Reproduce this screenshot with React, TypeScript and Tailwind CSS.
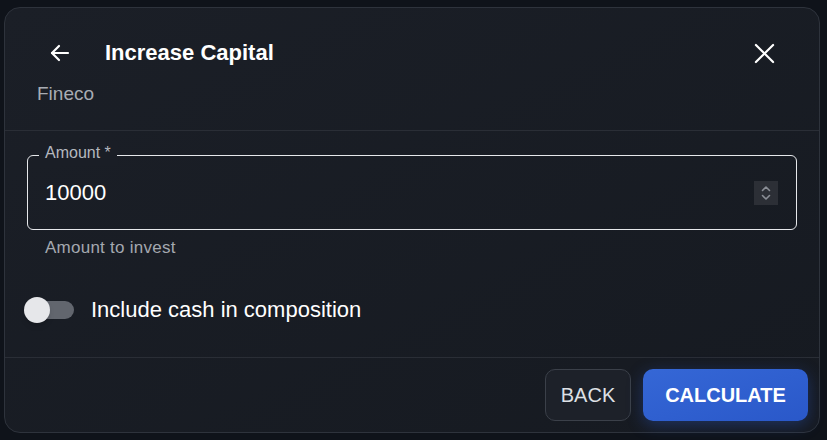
import React from 'react';

const ArrowLeft = () => (
  <svg width="24" height="24" viewBox="0 0 24 24" fill="none" stroke="currentColor" strokeWidth="2.2" strokeLinecap="round" strokeLinejoin="round">
    <path d="M20 12H4" />
    <path d="M11 5l-7 7 7 7" />
  </svg>
);

const CloseIcon = () => (
  <svg width="21" height="21" viewBox="0 0 22 22" fill="none" stroke="currentColor" strokeWidth="2.3" strokeLinecap="round">
    <path d="M2 2l18 18" />
    <path d="M20 2L2 20" />
  </svg>
);

const Spinner = () => (
  <div className="flex h-[24px] w-[24px] items-center justify-center bg-[#2c2f36]">
    <svg width="12" height="18" viewBox="0 0 12 18" fill="none" stroke="#8a8e96" strokeWidth="1.6" strokeLinecap="round" strokeLinejoin="round">
      <path d="M2.5 6.5L6 3l3.5 3.5" />
      <path d="M2.5 11.5L6 15l3.5-3.5" />
    </svg>
  </div>
);

export default function App() {
  return (
    <div
      className="h-[440px] w-[827px] bg-[#0f131a] pl-[4px] pt-[7px]"
      style={{ fontFamily: '"Liberation Sans", Arial, sans-serif' }}
    >
      <div className="flex h-[426px] w-[816px] flex-col rounded-[16px] border border-[#2e333c] bg-gradient-to-br from-[#1b1f27] to-[#161a21]">
        {/* Header */}
        <div className="flex h-[123px] flex-col border-b border-[#2a2e36] px-[32px]">
          <div className="mt-[27px] flex h-[36px] items-center">
            <div className="flex w-[48px] items-center pl-[11px] text-white">
              <ArrowLeft />
            </div>
            <h1 className="ml-[20px] text-[22px] leading-[28px] font-bold text-white">Increase Capital</h1>
            <div className="ml-auto mr-[12px] text-white">
              <CloseIcon />
            </div>
          </div>
          <p className="mt-[11px] text-[19px] leading-[24px] text-[#a8acb3]">Fineco</p>
        </div>

        {/* Body */}
        <div className="flex flex-1 flex-col border-b border-[#2a2e36] px-[22px]">
          <div className="relative mt-[24px] flex h-[75px] items-center rounded-[6px] border border-[#e6e8eb] pl-[17px] pr-[18px]">
            <span className="absolute -top-[15px] left-[11px] bg-[#1a1e26] px-[6px] text-[16px] leading-[24px] text-[#b4b8bf]">Amount *</span>
            <span className="text-[22px] leading-[28px] text-white">10000</span>
            <div className="ml-auto">
              <Spinner />
            </div>
          </div>
          <p className="ml-[18px] mt-[8px] text-[17px] leading-[20px] tracking-[0.25px] text-[#a4a8af]">Amount to invest</p>

          <div className="mt-[38px] flex h-[28px] items-center">
            <div className="relative -ml-[3px] flex h-[26px] w-[52px] items-center">
              <div className="ml-[12px] h-[18px] w-[38px] rounded-full bg-[#62666e]" />
              <div className="absolute left-0 top-0 h-[26px] w-[26px] rounded-full bg-[#e6e7ea] shadow-md" />
            </div>
            <span className="ml-[15px] text-[22px] leading-[28px] text-white">Include cash in composition</span>
          </div>
        </div>

        {/* Footer */}
        <div className="flex h-[74px] items-center justify-end gap-[12px] pr-[11px]">
          <button className="h-[52px] w-[86px] rounded-[10px] border border-[#3b4049] bg-[#1d2129] text-[20px] text-[#dde0e5]">
            BACK
          </button>
          <button className="h-[52px] w-[165px] rounded-[10px] bg-gradient-to-br from-[#3567d6] to-[#2a58c9] text-[20px] font-bold text-white shadow-[0_4px_16px_rgba(47,95,211,0.35)]">
            CALCULATE
          </button>
        </div>
      </div>
    </div>
  );
}
